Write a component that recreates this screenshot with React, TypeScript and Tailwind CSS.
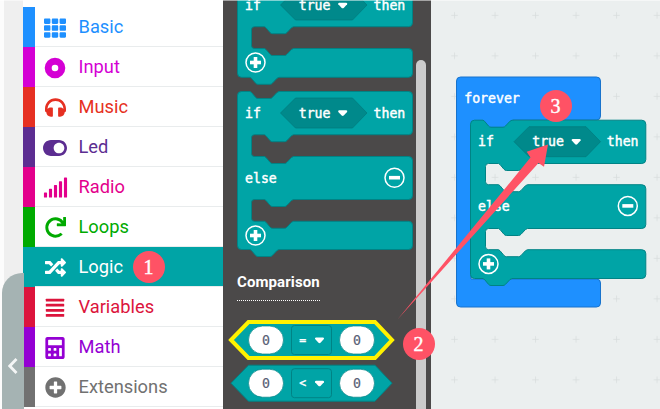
import type { ReactNode } from "react";
import {
  FaTh,
  FaHeadphones,
  FaToggleOn,
  FaSignal,
  FaRedo,
  FaRandom,
  FaCalculator,
  FaPlusCircle,
} from "react-icons/fa";

const MONO = "font-['DejaVu_Sans_Mono',monospace]";

function DiscIcon() {
  return (
    <svg width="22" height="22" viewBox="0 0 22 22">
      <circle cx="11" cy="11" r="6.8" fill="none" stroke="currentColor" strokeWidth="7" />
    </svg>
  );
}

function LinesIcon() {
  return (
    <svg width="20" height="20" viewBox="0 0 20 20" fill="currentColor">
      {[0.7, 5.8, 10.9, 16].map((y) => (
        <rect key={y} x="0.8" y={y} width="18.4" height="2.8" rx="0.6" />
      ))}
    </svg>
  );
}

type Category = { name: string; icon: ReactNode; bar: string; text: string; active?: boolean };

const categories: Category[] = [
  { name: "Basic", icon: <FaTh size={22} />, bar: "bg-[#1e90ff]", text: "text-[#1e90ff]" },
  { name: "Input", icon: <DiscIcon />, bar: "bg-[#d400d4]", text: "text-[#d400d4]" },
  { name: "Music", icon: <FaHeadphones size={21} />, bar: "bg-[#e63022]", text: "text-[#e63022]" },
  { name: "Led", icon: <FaToggleOn size={24} />, bar: "bg-[#5c2d91]", text: "text-[#5c2d91]" },
  { name: "Radio", icon: <FaSignal size={25} />, bar: "bg-[#e3008c]", text: "text-[#e3008c]" },
  { name: "Loops", icon: <FaRedo size={21} />, bar: "bg-[#00aa00]", text: "text-[#00aa00]" },
  { name: "Logic", icon: <FaRandom size={21} />, bar: "bg-[#00a4a6]", text: "text-white", active: true },
  { name: "Variables", icon: <LinesIcon />, bar: "bg-[#dc143c]", text: "text-[#dc143c]" },
  { name: "Math", icon: <FaCalculator size={22} />, bar: "bg-[#9400d3]", text: "text-[#9400d3]" },
  { name: "Extensions", icon: <FaPlusCircle size={21} />, bar: "bg-[#717171]", text: "text-[#717171]" },
];

function Label({ x, y, children }: { x: number; y: number; children: string }) {
  return (
    <text x={x} y={y} fill="#fff" stroke="#fff" strokeWidth="0.45" className={`${MONO} text-[13.2px]`}>
      {children}
    </text>
  );
}

function Caret({ x, y }: { x: number; y: number }) {
  return (
    <path
      d={`M${x + 1} ${y}h7q1.6 .2 .9 1.6l-3.4 3.6q-1 .9-2 0l-3.4-3.6q-.7-1.4 .9-1.6z`}
      fill="#fff"
    />
  );
}

function RoundButton({ x, y, plus }: { x: number; y: number; plus?: boolean }) {
  return (
    <g stroke="#fff" fill="none">
      <circle cx={x} cy={y} r="9.5" strokeWidth="1.5" />
      <path d={`M${x - 5.5} ${y}h11`} strokeWidth="3.6" />
      {plus && <path d={`M${x} ${y - 5.5}v11`} strokeWidth="3.6" />}
    </g>
  );
}

const notchRight = "l1.5 1 4 4.8q1 1.2 2.5 1.2h12q1.5 0 2.5-1.2l4.5-4.8 2-1";
const notchLeft = "l-2 1-4.5 4.8q-1 1.2-2.5 1.2h-12q-1.5 0-2.5-1.2l-4-4.8-1.5-1";

// Outline of an if / else block, origin at its top left corner.
function ifElsePath(w: number, inner: number, rows: [number, number, number, number, number]) {
  const [a, b, c, d, e] = rows;
  const gap = (top: number, bottom: number) =>
    `V${top - 4}q0 4-4 4H${inner + 42}${notchLeft}H${inner + 3}q-3 0-3 3V${bottom - 3}q0 3 3 3h10${notchRight}H${w - 4}q4 0 4 4`;
  return `M0 4q0-4 4-4h8.5${notchRight}H${w - 4}q4 0 4 4${gap(a, b)}${gap(c, d)}V${e - 4}q0 4-4 4H41.5${notchLeft}H4q-4 0-4-4z`;
}

function IfElse({
  x,
  y,
  w,
  inner,
  rows,
  hexX,
}: {
  x: number;
  y: number;
  w: number;
  inner: number;
  rows: [number, number, number, number, number];
  hexX: number;
}) {
  return (
    <g transform={`translate(${x} ${y})`}>
      <path d={ifElsePath(w, inner, rows)} fill="#00a4a6" stroke="#008385" strokeWidth="1" />
      <path
        d={`M${hexX} 21.5l15-15h57l14.5 15-14.5 15h-57z`}
        fill="#00898b"
        stroke="#007a7c"
        strokeWidth="0.7"
      />
      <Label x={7.5} y={26}>if</Label>
      <Label x={hexX + 18.2} y={26}>true</Label>
      <Caret x={hexX + 57.7} y={18.8} />
      <Label x={w - 39} y={26}>then</Label>
      <Label x={7.5} y={rows[1] + 26}>else</Label>
      <RoundButton x={w - 18} y={rows[1] + 21.2} />
      <RoundButton x={18} y={rows[3] + 14.2} plus />
    </g>
  );
}

function Comparison({ y, op, selected }: { y: number; op: string; selected?: boolean }) {
  return (
    <g transform={`translate(0 ${y})`}>
      <path
        d="M8 18L25.500 0H152L169 18L152 36H25.500Z"
        fill="#00a4a6"
        stroke={selected ? "#fff200" : "#008385"}
        strokeWidth={selected ? 4 : 1}
      />
      {[25.5, 116.5].map((x) => (
        <g key={x}>
          <rect x={x} y="4" width="35" height="28" rx="14" fill="#fff" stroke="#008385" strokeWidth="0.7" />
          <text x={x + 13.5} y="22.900" fill="#575e75" stroke="#575e75" strokeWidth="0.2" className={`${MONO} text-[13.2px]`}>
            0
          </text>
        </g>
      ))}
      <rect x="68.500" y="3.500" width="40" height="29" rx="3" fill="none" stroke="#008385" />
      <text x="76.300" y="22.300" fill="#fff" stroke="#fff" strokeWidth="0.4" className={`${MONO} text-[11.5px]`}>
        {op}
      </text>
      <Caret x={92} y={15.5} />
    </g>
  );
}

function Badge({ children, place }: { children: string; place: string }) {
  return (
    <div
      className={`absolute flex size-8 items-center justify-center rounded-full bg-[#ff5265] font-['Liberation_Serif',serif] text-[20px] leading-none text-white [-webkit-text-stroke:0.4px_white] ${place}`}
    >
      {children}
    </div>
  );
}

const blockRows: [number, number, number, number, number] = [43.2, 65, 108, 129.800, 158];

export default function App() {
  return (
    <div className="relative flex h-[409px] w-[660px] overflow-hidden bg-[#ebefef]">
      <div className="w-[23px] shrink-0 border-l-4 border-[#fcfcfc] bg-[#efefef]" />

      <nav className="w-[200px] shrink-0 overflow-hidden bg-white pt-[7px] font-[Roboto,sans-serif]">
        {categories.map((c) => (
          <div key={c.name} className="flex h-10">
            <div className={`w-3 shrink-0 ${c.bar}`} />
            <div
              className={`flex flex-1 items-center border-b border-[#e9eced] pt-0.5 ${c.text} ${
                c.active ? "bg-[#00a4a6]" : ""
              }`}
            >
              <span className="flex w-10 shrink-0 justify-center">{c.icon}</span>
              <span className="pl-[3.500px] text-[18.300px] leading-none">{c.name}</span>
            </div>
          </div>
        ))}
      </nav>

      <aside className="relative flex w-[208px] shrink-0 flex-col overflow-hidden bg-[#4b4949]">
        <svg width="208" height="270" className="shrink-0">
          <g transform="translate(0 -16.500)">
            <path
              transform="translate(14.500 0)"
              d={`M0 0H175V39.200q0 4-4 4H56${notchLeft}H17q-3 0-3 3V62q0 3 3 3h10${notchRight}H171q4 0 4 4V89.800q0 4-4 4H41.500${notchLeft}H4q-4 0-4-4z`}
              fill="#00a4a6"
              stroke="#008385"
            />
            <path d="M57.500 21.500l15-15h57l14.500 15-14.500 15h-57z" fill="#00898b" stroke="#007a7c" strokeWidth="0.7" />
            <Label x={22} y={26.6}>if</Label>
            <Label x={75.7} y={26.6}>true</Label>
            <Caret x={115.2} y={19.2} />
            <Label x={150.5} y={26.6}>then</Label>
            <RoundButton x={32.500} y={79} plus />
          </g>
          <IfElse x={14.5} y={91.5} w={175} inner={14} rows={blockRows} hexX={43} />
        </svg>
        <div className="flex shrink-0 pl-3.5">
          <h3 className="h-[31px] border-b border-dotted border-white pt-0.5 font-[Roboto,sans-serif] text-[15px] leading-5 font-bold tracking-[0.1px] text-white">
            Comparison
          </h3>
        </div>
        <svg width="208" height="108" className="shrink-0">
          <Comparison y={21} op="=" selected />
          <Comparison y={64.2} op="&lt;" />
        </svg>
        <div className="absolute top-[60px] right-[5px] bottom-0 w-2.5 rounded-t-full bg-[#cbcbcb]" />
      </aside>

      <main className="flex-1">
        <svg width="229" height="409" viewBox="431 0 229 409">
          <defs>
            <pattern id="grid" width="40.500" height="40.500" x="434.300" y="-4.900" patternUnits="userSpaceOnUse">
              <path d="M17 20.250h6.500M20.250 17v6.500" stroke="#d9dddd" strokeWidth="0.8" />
            </pattern>
          </defs>
          <rect x="431" width="229" height="409" fill="url(#grid)" />
          <path
            d="M456.500 81q0-4 4-4H596.500q4 0 4 4V116q0 4-4 4H513V128H471V279H596.500q4 0 4 4V303q0 4-4 4H460.500q-4 0-4-4z"
            fill="#1e90ff"
            stroke="#1873cc"
          />
          <Label x={464.2} y={103}>forever</Label>
          <IfElse x={470.5} y={120.2} w={175.3} inner={15} rows={[43.3, 64.5, 108.3, 129.5, 158.3]} hexX={43.5} />
        </svg>
      </main>

      <svg className="absolute top-0 left-0" width="660" height="409">
        <path d="M397.500 319.500L530.500 157.500 526.700 151.700 548 144.500 544 166.800 538.500 163Z" fill="#ff5265" />
      </svg>
      <Badge place="left-[132.500px] top-[251px]">1</Badge>
      <Badge place="left-[402.500px] top-[328px]">2</Badge>
      <Badge place="left-[539.500px] top-[90px]">3</Badge>

      <div className="absolute top-[273px] left-0.5 flex h-[136px] w-[22px] items-center justify-center rounded-tl-[20px] bg-[#a5b3b3] pt-[49px]">
        <svg width="10" height="16" viewBox="0 0 10 16" fill="none" stroke="#f4f6f6" strokeWidth="2.800">
          <path d="M8.500 1L1.800 8l6.700 7" />
        </svg>
      </div>
      <div className="absolute inset-x-0 top-0 h-px bg-white/50" />
    </div>
  );
}
